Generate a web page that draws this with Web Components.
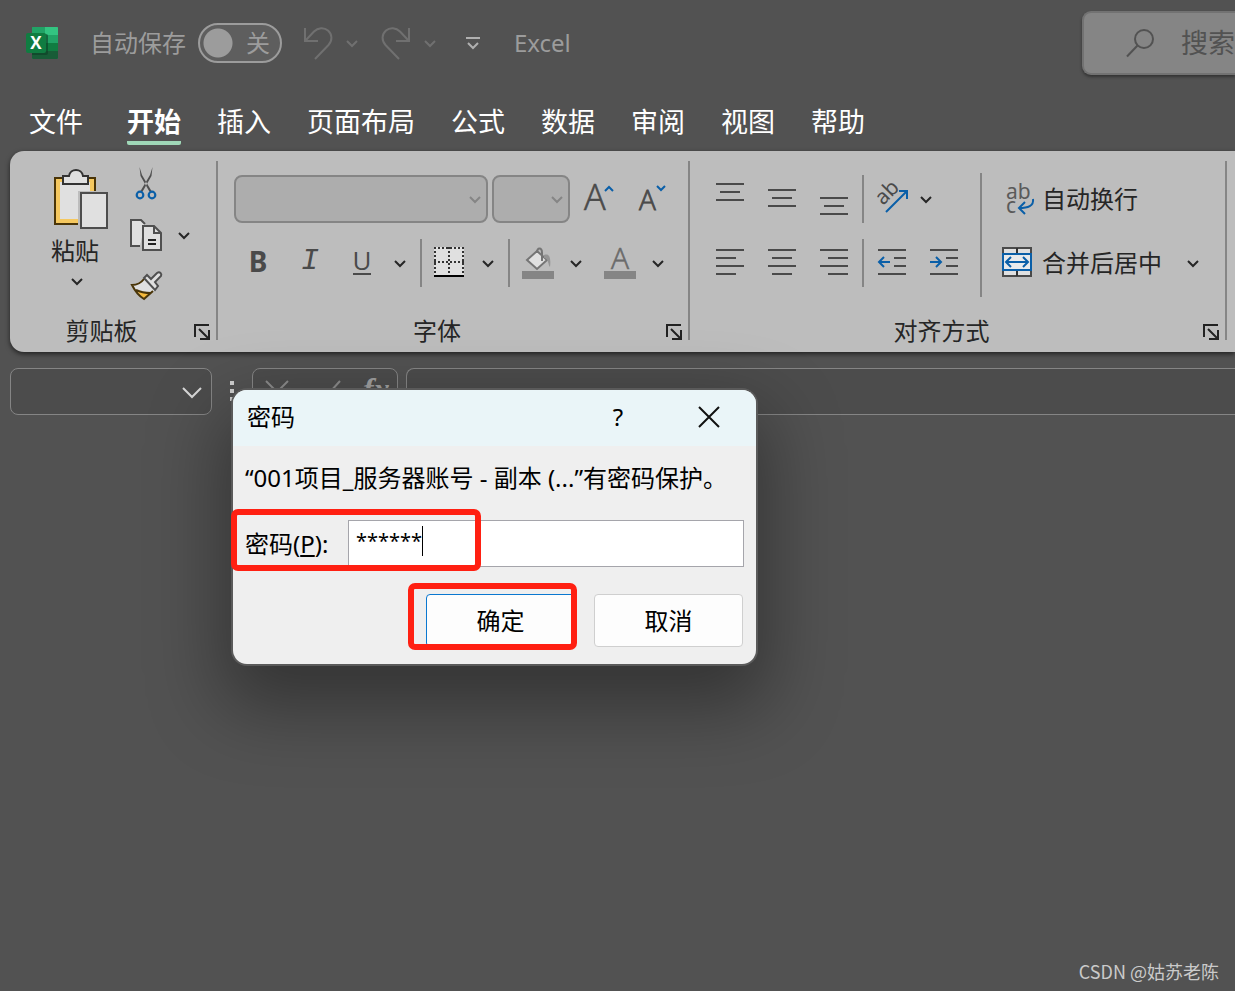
<!DOCTYPE html>
<html lang="zh-CN">
<head>
<meta charset="utf-8">
<title>Excel</title>
<style>
  html, body { margin: 0; height: 100%; }
  body {
    background: #525252;
    font-family: "Noto Sans", "Noto Sans CJK SC", sans-serif;
    overflow: hidden;
  }
</style>
</head>
<body>
<excel-window></excel-window>

<script>
const BASE = `
  *, *::before, *::after { box-sizing: border-box; }
  button, input, select {
    font: inherit; color: inherit; margin: 0; padding: 0;
    border: 0; background: none; outline: none; min-width: 0;
  }
  button { display: flex; align-items: center; justify-content: center; }
`;

function define(name, css, html, setup) {
  const template = document.createElement('template');
  template.innerHTML = `<style>${BASE}${css}</style>${html}`;
  customElements.define(name, class extends HTMLElement {
    constructor() {
      super();
      this.attachShadow({ mode: 'open' }).append(template.content.cloneNode(true));
    }
    connectedCallback() { if (setup) setup(this, this.shadowRoot); }
  });
}

/* Horizontal rules used by the alignment icons: [x1, x2, y] */
const rules = list => list.map(([a, b, y]) => `<path d="M${a} ${y}H${b}" stroke="#4a4a4a" stroke-width="2"/>`).join('');

const ICONS = {
  logo: [34, 34, `
    <path d="M8 1h24a1 1 0 0 1 1 1v30a1 1 0 0 1-1 1H8a1 1 0 0 1-1-1V2a1 1 0 0 1 1-1z" fill="#21a366"/>
    <path d="M20 1h12a1 1 0 0 1 1 1v7H20z" fill="#33c481"/>
    <path d="M7 9V2a1 1 0 0 1 1-1h12v8z" fill="#21a366"/>
    <path d="M7 9h13v8H7z" fill="#107c41"/>
    <path d="M20 17h13v8H20z" fill="#107c41"/>
    <path d="M7 17h13v8h13v7a1 1 0 0 1-1 1H8a1 1 0 0 1-1-1z" fill="#185c37"/>
    <path d="M7 8h14a2 2 0 0 1 2 2v17a2 2 0 0 1-2 2H7z" fill="#0d3d24" opacity=".6"/>
    <rect x="1" y="7" width="20" height="20" rx="2" fill="#107c41"/>
    <text x="11" y="23" font-size="17" font-weight="700" text-anchor="middle" fill="#fff" font-family="Open Sans, sans-serif">X</text>`],
  undo: [32, 34, `<path d="M3 2v13h13M4 14l8-8.500C16 1.500 22 1 26 4.500c4.500 4 4.500 10 .5 14.500L13 33" stroke="#707070" stroke-width="2"/>`],
  redo: [32, 34, `<path d="M29 2v13H16M28 14l-8-8.500C16 1.500 10 1 6 4.500c-4.500 4-4.500 10-.5 14.500L19 33" stroke="#707070" stroke-width="2"/>`],
  chevron: [12, 12, `<path d="M1 4l5 5 5-5" stroke="currentColor" stroke-width="2"/>`],
  chevwide: [20, 12, `<path d="M1 2l9 9 9-9" stroke="currentColor" stroke-width="2"/>`],
  customize: [16, 16, `<path d="M0 3h14M2 8l5 5 5-5" stroke="#b0b0b0" stroke-width="2"/>`],
  search: [30, 30, `<circle cx="19" cy="11" r="9" stroke="#525252" stroke-width="2"/><path d="M12.500 17.500L2 28.500" stroke="#525252" stroke-width="2"/>`],
  paste: [62, 62, `
    <rect x="9" y="10" width="40" height="46" fill="#f5c85f" stroke="#4a3508" stroke-width="2"/>
    <path d="M14 14h30v37H14z" fill="#e0e0e0"/>
    <path d="M17 16V8h6c1-8 13-8 14 0h5v8z" fill="#e0e0e0" stroke="#333" stroke-width="2"/>
    <path d="M32 23h30v37H32z" fill="#bdbdbd"/>
    <rect x="35" y="25" width="26" height="35" fill="#e0e0e0" stroke="#4d4d4d" stroke-width="2"/>`],
  cut: [34, 34, `
    <path d="M10.500 0L13 8l9.500 16-2 .8L11.500 9zM23.500 0L21 8l-9.500 16 2 .8L22.500 9z" fill="#505050"/>
    <circle cx="11" cy="28" r="3.300" stroke="#0a5fa8" stroke-width="2.200"/><circle cx="23" cy="28" r="3.300" stroke="#0a5fa8" stroke-width="2.200"/>`],
  copy: [34, 34, `
    <path d="M11 28H2V2h10l4 4" fill="#e0e0e0"/><path d="M11 28H2V2h10l4 4" stroke="#505050" stroke-width="2"/>
    <path d="M14 8h11l7 7v17H14z" fill="#e0e0e0" stroke="#505050" stroke-width="2"/>
    <path d="M25 8v7h7" stroke="#505050" stroke-width="2"/><path d="M19 22h8M19 26h8" stroke="#222" stroke-width="2"/>`],
  brush: [34, 34, `
    <path d="M3 16c6 0 9-2 12-6l11 11-11 9z" fill="#e0e0e0"/>
    <path d="M7 21c4 2 9 3 15 3l-7 6z" fill="#f5b93a"/>
    <path d="M15 10C12 14 9 16 3 16c3 6 7 11 12 14l9-8M7 21c4 2 9 3 15 3" stroke="#4a3508" stroke-width="2"/>
    <path d="M15 9l3-3 4 4 6-6c3-2 5 1 4 3l-6 6 3 4-3 4z" fill="#e0e0e0" stroke="#505050" stroke-width="2"/>`],
  launcher: [18, 18, `<path d="M2 15V3h14M6 7l9 9M16 8v9H7" stroke="#222" stroke-width="2"/>`],
  grow: [34, 34, `<text x="1" y="28" font-size="36" font-weight="300" fill="#4a4a4a" stroke="#4a4a4a" stroke-width=".6" font-family="Open Sans, sans-serif">A</text><path d="M22 9l4-4 4 4" stroke="#0a5fa8" stroke-width="2"/>`],
  shrink: [34, 34, `<text x="4" y="28" font-size="28" font-weight="300" fill="#4a4a4a" stroke="#4a4a4a" stroke-width=".8" font-family="Open Sans, sans-serif">A</text><path d="M22 4l4 4 4-4" stroke="#0a5fa8" stroke-width="2"/>`],
  borders: [32, 32, `
    <path d="M0 0h30v30H0z" fill="#e0e0e0"/>
    <path d="M0 1h30M0 15h30M1 0v28M15 0v28M29 0v28" stroke="#333" stroke-width="2" stroke-dasharray="2 2"/>
    <path d="M0 29h30" stroke="#000" stroke-width="2"/>`],
  fill: [34, 34, `
    <path d="M1 25h32v8H1z" fill="#858585"/>
    <path d="M6 14L16 5l10 9-10 9z" fill="#e0e0e0" stroke="#757575" stroke-width="2"/>
    <path d="M16 7c0-6 5-6 5 0v8" stroke="#757575" stroke-width="2"/>
    <path d="M23 9c6-2 7 4 6 12-2-2-1-8-6-9z" fill="#959595"/>`],
  fontcolor: [34, 34, `<path d="M1 25h32v8H1z" fill="#858585"/><text x="17" y="23" font-size="30" font-weight="300" text-anchor="middle" fill="#6a6a6a" stroke="#6a6a6a" stroke-width=".6" font-family="Open Sans, sans-serif">A</text>`],
  top: [28, 32, rules([[0, 28, 1], [4, 24, 9], [0, 28, 17]])],
  middle: [28, 32, rules([[0, 28, 7], [4, 24, 15], [0, 28, 23]])],
  bottom: [28, 32, rules([[0, 28, 15], [4, 24, 23], [0, 28, 31]])],
  left: [28, 28, rules([[0, 28, 1], [0, 20, 9], [0, 28, 17], [0, 20, 25]])],
  center: [28, 28, rules([[0, 28, 1], [4, 24, 9], [0, 28, 17], [4, 24, 25]])],
  right: [28, 28, rules([[0, 28, 1], [8, 28, 9], [0, 28, 17], [8, 28, 25]])],
  outdent: [28, 28, rules([[0, 28, 1], [16, 28, 9], [16, 28, 17], [0, 28, 25]]) + `<path d="M12 13H2M6 8l-5 5 5 5" stroke="#0a5fa8" stroke-width="2"/>`],
  indent: [28, 28, rules([[0, 28, 1], [16, 28, 9], [16, 28, 17], [0, 28, 25]]) + `<path d="M0 13h10M6 8l5 5-5 5" stroke="#0a5fa8" stroke-width="2"/>`],
  orient: [34, 34, `<text transform="translate(8 24) rotate(-45)" font-size="21" fill="#4a4a4a" font-family="Noto Sans, sans-serif">ab</text><path d="M11 30l20-20M24 9h8v8" stroke="#0a5fa8" stroke-width="2"/>`],
  wrap: [34, 34, `<text font-size="21" fill="#5a5a5a" font-family="Noto Sans, sans-serif"><tspan x="6" y="17">ab</tspan><tspan x="6" y="31">c</tspan></text><path d="M33 17c1 7-5 9-14 9M25 20l-6 6 6 6" stroke="#0a5fa8" stroke-width="2"/>`],
  merge: [34, 34, `
    <path d="M3 2h28v28H3z" fill="#e0e0e0" stroke="#4a4a4a" stroke-width="2"/><path d="M17 2v28" stroke="#333" stroke-width="2"/>
    <path d="M3 8h28v16H3z" fill="#e8eaec" stroke="#0a5fa8" stroke-width="2"/>
    <path d="M7 16h20M11 11l-5 5 5 5M23 11l5 5-5 5" stroke="#0a5fa8" stroke-width="2"/>`],
  cancel: [24, 24, `<path d="M1 1l22 22M23 1L1 23" stroke="#8c8c8c" stroke-width="2"/>`],
  enter: [30, 24, `<path d="M1 13l9 9L29 1" stroke="#8c8c8c" stroke-width="2"/>`],
  close: [22, 22, `<path d="M1 1l20 20M21 1L1 21" stroke="#111" stroke-width="2"/>`],
  grip: [4, 24, `<path d="M0 2h4M0 10h4M0 18h4" stroke="#d0d0d0" stroke-width="4"/>`]
};

customElements.define('ui-icon', class extends HTMLElement {
  connectedCallback() {
    if (this.shadowRoot) return;
    const [w, h, art] = ICONS[this.getAttribute('name')];
    this.attachShadow({ mode: 'open' }).innerHTML = `
      <style>:host { display: block; flex: none; } svg { display: block; overflow: visible; }</style>
      <svg width="${w}" height="${h}" viewBox="0 0 ${w} ${h}" fill="none" aria-hidden="true">${art}</svg>`;
  }
});

/* A ribbon tool: fixed cell with one icon or letter; "menu" makes it a narrow drop-down arrow */
define('tool-button', `
  :host { display: block; width: 52px; height: 48px; flex: none; }
  :host([menu]) { width: 24px; }
  :host([small]) { width: 34px; height: 34px; }
  button { width: 100%; height: 100%; }
`, `<button type="button"><slot></slot></button>`, (host, root) => {
  root.querySelector('button').setAttribute('aria-label', host.getAttribute('label') || '');
});

define('ribbon-combo', `
  :host { display: grid; height: 48px; flex: none; color: #858585; }
  select, ui-icon { grid-area: 1 / 1; }
  select { appearance: none; width: 100%; height: 100%; border: 2px solid #858585; border-radius: 8px; background: #adadad; }
  ui-icon { place-self: center end; margin-right: 7px; pointer-events: none; }
`, `<select></select><ui-icon name="chevron"></ui-icon>`, (host, root) => {
  root.querySelector('select').setAttribute('aria-label', host.getAttribute('label'));
});

define('ribbon-group', `
  :host { display: flex; flex: none; }
  section { flex: 1; display: flex; flex-direction: column; }
  .body { flex: 1; }
  footer { display: flex; align-items: center; height: 42px; padding-right: 5px; }
  h2 { flex: 1; margin: 0; font-size: 24px; line-height: 32px; font-weight: 400; text-align: center; color: #262626; }
  :host([wide]) h2 { padding-right: 9px; }
  footer button { width: 18px; height: 18px; }
  .rule { width: 2px; margin: 10px 0 12px; background: #858585; }
`, `
  <section>
    <div class="body"><slot></slot></div>
    <footer><h2></h2><button type="button" aria-label="更多设置"><ui-icon name="launcher"></ui-icon></button></footer>
  </section>
  <div class="rule"></div>
`, (host, root) => { root.querySelector('h2').textContent = host.getAttribute('label'); });

define('title-bar', `
  :host { display: flex; align-items: center; height: 86px; padding-left: 25px; color: #9c9c9c; font-size: 24px; line-height: 32px; }
  label { display: flex; align-items: center; gap: 12px; margin-left: 31px; }
  .switch { display: grid; align-items: center; width: 84px; height: 40px; }
  .switch > * { grid-area: 1 / 1; }
  .switch input { appearance: none; width: 84px; height: 40px; border: 2px solid #9c9c9c; border-radius: 20px; background: radial-gradient(circle at 18px 50%, #9c9c9c 14px, #5e5e5e 15px); }
  .switch span { justify-self: end; margin-right: 12px; pointer-events: none; }
  .history { display: flex; align-items: center; gap: 12px; margin-left: 20px; color: #707070; }
  .redo { margin-left: 10px; }
  .customize { margin-left: 18px; }
  h1 { margin: 0 0 0 32px; font-size: 24px; font-weight: 400; flex: 1; }
  .search { display: flex; align-items: center; gap: 26px; width: 153px; height: 64px; padding-left: 41px; background: #858585; border: 2px solid #727272; border-right: 0; border-radius: 9px 0 0 9px; box-shadow: 0 2px 3px #333; margin: 0; }
  .search input { flex: 1; font-size: 27px; line-height: 36px; color: #525252; }
  .search input::placeholder { color: #525252; opacity: 1; }
`, `
  <ui-icon name="logo"></ui-icon>
  <label>自动保存<span class="switch"><input type="checkbox" role="switch"><span>关</span></span></label>
  <div class="history">
    <button type="button" aria-label="撤消"><ui-icon name="undo"></ui-icon></button>
    <button type="button" aria-label="撤消列表"><ui-icon name="chevron"></ui-icon></button>
    <button class="redo" type="button" aria-label="恢复"><ui-icon name="redo"></ui-icon></button>
    <button type="button" aria-label="恢复列表"><ui-icon name="chevron"></ui-icon></button>
    <button class="customize" type="button" aria-label="自定义快速访问工具栏"><ui-icon name="customize"></ui-icon></button>
  </div>
  <h1>Excel</h1>
  <label class="search"><ui-icon name="search"></ui-icon><input type="text" placeholder="搜索" aria-label="搜索"></label>
`);

define('tab-strip', `
  :host { display: block; height: 65px; }
  nav { display: flex; gap: 36px; padding: 16px 0 0 29px; font-size: 27px; line-height: 40px; }
  a { color: #fff; text-decoration: none; height: 43px; white-space: nowrap; }
  a[aria-current] { font-weight: 700; border-bottom: 4px solid #a0d8b8; border-radius: 2px; margin-left: 8px; }
`, `
  <nav>
    <a href="#file">文件</a><a href="#home" aria-current="page">开始</a><a href="#insert">插入</a>
    <a href="#layout">页面布局</a><a href="#formulas">公式</a><a href="#data">数据</a>
    <a href="#review">审阅</a><a href="#view">视图</a><a href="#help">帮助</a>
  </nav>
`);

define('clipboard-tools', `
  :host { display: flex; padding: 16px 20px 0 36px; color: #262626; }
  .paste { flex-direction: column; width: 62px; margin: 0 21px 0 0; justify-content: flex-start; font-size: 24px; line-height: 42px; height: 134px; white-space: nowrap; }
  .paste ui-icon:first-child { margin-top: 1px; }
  .paste ui-icon:last-child { margin-top: 3px; }
  .paste span { margin-right: 4px; }
  .small { display: grid; grid-template-columns: 34px 24px; gap: 17px 9px; align-content: start; }
  .small [menu] { height: 34px; }
  .brush { grid-row: 3; }
`, `
  <button class="paste" type="button"><ui-icon name="paste"></ui-icon><span>粘贴</span><ui-icon name="chevron"></ui-icon></button>
  <div class="small">
    <tool-button small label="剪切"><ui-icon name="cut"></ui-icon></tool-button><span></span>
    <tool-button small label="复制"><ui-icon name="copy"></ui-icon></tool-button>
    <tool-button menu label="复制选项"><ui-icon name="chevron"></ui-icon></tool-button>
    <tool-button small class="brush" label="格式刷"><ui-icon name="brush"></ui-icon></tool-button>
  </div>
`);

define('font-tools', `
  :host { display: flex; flex-direction: column; gap: 16px; padding: 24px 10px 0 14px; color: #262626; }
  .row { display: flex; height: 48px; }
  .fonts { gap: 4px; padding-left: 2px; }
  .fonts tool-button + tool-button { margin-left: -4px; }
  .family { width: 254px; } .size { width: 78px; }
  .rule { width: 2px; margin: 0 2px 0 8px; background: #858585; }
  .letter { color: #4a4a4a; font-size: 28px; line-height: 36px; margin-bottom: 4px; }
  .i { font-family: "Liberation Mono", monospace; font-style: italic; font-size: 30px; }
  .u { font-family: "Open Sans", sans-serif; font-size: 26px; line-height: 26px; border-bottom: 2px solid #4a4a4a; }
  .last { margin-left: 6px; }
`, `
  <div class="row fonts">
    <ribbon-combo class="family" label="字体"></ribbon-combo><ribbon-combo class="size" label="字号"></ribbon-combo>
    <tool-button label="增大字号"><ui-icon name="grow"></ui-icon></tool-button>
    <tool-button label="减小字号"><ui-icon name="shrink"></ui-icon></tool-button>
  </div>
  <div class="row">
    <tool-button label="加粗"><b class="letter">B</b></tool-button>
    <tool-button label="倾斜"><span class="letter i">I</span></tool-button>
    <tool-button label="下划线"><span class="letter u">U</span></tool-button>
    <tool-button menu label="下划线选项"><ui-icon name="chevron"></ui-icon></tool-button>
    <span class="rule"></span>
    <tool-button label="边框"><ui-icon name="borders"></ui-icon></tool-button>
    <tool-button menu label="边框选项"><ui-icon name="chevron"></ui-icon></tool-button>
    <span class="rule"></span>
    <tool-button label="填充颜色"><ui-icon name="fill"></ui-icon></tool-button>
    <tool-button menu label="填充颜色选项"><ui-icon name="chevron"></ui-icon></tool-button>
    <tool-button class="last" label="字体颜色"><ui-icon name="fontcolor"></ui-icon></tool-button>
    <tool-button menu label="字体颜色选项"><ui-icon name="chevron"></ui-icon></tool-button>
  </div>
`);

define('align-tools', `
  :host { display: flex; padding: 24px 0 0 14px; color: #262626; font-size: 24px; line-height: 32px; }
  .col { display: flex; flex-direction: column; gap: 16px; }
  .row { display: flex; height: 48px; }
  .rule { width: 2px; margin: 0 2px; background: #858585; }
  .tall { width: 2px; height: 124px; margin: -2px 18px 0 10px; background: #858585; }
  .command { gap: 8px; white-space: nowrap; }
  .merge { gap: 19px; }
  .near { margin-left: -4px; }
`, `
  <div class="col">
    <div class="row">
      <tool-button label="顶端对齐"><ui-icon name="top"></ui-icon></tool-button>
      <tool-button label="垂直居中"><ui-icon name="middle"></ui-icon></tool-button>
      <tool-button label="底端对齐"><ui-icon name="bottom"></ui-icon></tool-button>
      <span class="rule"></span>
      <tool-button label="方向"><ui-icon name="orient"></ui-icon></tool-button>
      <tool-button menu class="near" label="方向选项"><ui-icon name="chevron"></ui-icon></tool-button>
    </div>
    <div class="row">
      <tool-button label="左对齐"><ui-icon name="left"></ui-icon></tool-button>
      <tool-button label="居中"><ui-icon name="center"></ui-icon></tool-button>
      <tool-button label="右对齐"><ui-icon name="right"></ui-icon></tool-button>
      <span class="rule"></span>
      <tool-button label="减少缩进量"><ui-icon name="outdent"></ui-icon></tool-button>
      <tool-button label="增加缩进量"><ui-icon name="indent"></ui-icon></tool-button>
    </div>
  </div>
  <span class="tall"></span>
  <div class="col">
    <div class="row"><button class="command" type="button"><ui-icon name="wrap"></ui-icon>自动换行</button></div>
    <div class="row merge">
      <button class="command" type="button"><ui-icon name="merge"></ui-icon>合并后居中</button>
      <tool-button menu label="合并选项"><ui-icon name="chevron"></ui-icon></tool-button>
    </div>
  </div>
`);

define('ribbon-bar', `
  :host { display: flex; margin-left: 10px; height: 201px; padding-right: 8px; background: #bdbdbd; border-radius: 14px 0 0 14px; box-shadow: 0 2px 5px rgba(0, 0, 0, .6); }
  .grow { flex: 1; }
`, `
  <ribbon-group label="剪贴板"><clipboard-tools></clipboard-tools></ribbon-group>
  <ribbon-group wide label="字体"><font-tools></font-tools></ribbon-group>
  <ribbon-group wide class="grow" label="对齐方式"><align-tools></align-tools></ribbon-group>
`);

define('formula-bar', `
  :host { display: flex; height: 47px; margin: 16px 0 0 10px; }
  .box { border: 1px solid #858585; border-radius: 8px; background: #4c4c4c; }
  .name { display: grid; width: 202px; color: #d8d8d8; }
  .name > * { grid-area: 1 / 1; }
  .name input { width: 100%; padding: 0 40px 0 12px; }
  .name button { place-self: center end; margin-right: 9px; }
  .grip { margin: 13px 18px 0; }
  .actions { display: flex; gap: 22px; width: 146px; padding: 11px 0 0 12px; }
  .actions button { height: 24px; }
  .fx { font-family: "Liberation Serif", serif; font-style: italic; font-weight: 700; font-size: 32px; line-height: 24px; margin-bottom: 6px; color: #a0a0a0; }
  .entry { flex: 1; margin-left: 8px; border-right: 0; border-radius: 8px 0 0 8px; color: #d8d8d8; padding: 0 12px; }
`, `
  <div class="box name"><input type="text" aria-label="名称框"><button type="button" aria-label="名称列表"><ui-icon name="chevwide"></ui-icon></button></div>
  <ui-icon class="grip" name="grip"></ui-icon>
  <div class="box actions">
    <button type="button" aria-label="取消输入"><ui-icon name="cancel"></ui-icon></button>
    <button type="button" aria-label="输入"><ui-icon name="enter"></ui-icon></button>
    <button type="button" aria-label="插入函数"><span class="fx">fx</span></button>
  </div>
  <input class="box entry" type="text" aria-label="编辑栏">
`);

define('password-dialog', `
  :host { display: block; width: 523px; border-radius: 14px; background: #efefef; color: #000; font-size: 24px; line-height: 32px; box-shadow: 0 0 0 2px #5a5a5a, 0 32px 72px 12px rgba(0, 0, 0, .36); }
  header { display: flex; align-items: center; height: 56px; padding: 0 36px 2px 14px; background: #eaf5f8; border-radius: 14px 14px 0 0; }
  h2 { flex: 1; margin: 0; font-size: 24px; font-weight: 400; }
  .help { width: 24px; margin-right: 68px; }
  .content { padding: 16px 12px 17px; }
  p { margin: 0; white-space: nowrap; }
  .field { display: flex; align-items: center; justify-content: space-between; margin-top: 26px; }
  .entry { display: grid; width: 396px; }
  .entry > * { grid-area: 1 / 1; }
  .entry input { width: 100%; height: 47px; border: 1px solid #a5a5ab; background: #fff; padding: 0 8px 6px 7px; font-size: 20px; }
  .caret { width: 1px; height: 30px; margin: 6px 0 0 74px; background: #000; }
  .actions { display: flex; justify-content: flex-end; gap: 19px; margin-top: 27px; padding-right: 1px; }
  .actions button { width: 149px; height: 53px; border: 1px solid #cfcfcf; border-radius: 4px; background: #fdfdfd; }
  .actions .primary { border-color: #0a78d0; }
`, `
  <header>
    <h2>密码</h2>
    <button class="help" type="button" aria-label="帮助">?</button>
    <button type="button" aria-label="关闭"><ui-icon name="close"></ui-icon></button>
  </header>
  <div class="content">
    <p>“001项目_服务器账号 - 副本 (...”有密码保护。</p>
    <div class="field">
      <label for="password">密码(<u>P</u>):</label>
      <div class="entry"><input id="password" type="text" value="******"><span class="caret"></span></div>
    </div>
    <div class="actions"><button class="primary" type="button">确定</button><button type="button">取消</button></div>
  </div>
`);

define('highlight-frame', `
  :host { display: block; box-sizing: border-box; border: 6px solid #ff2012; border-radius: 7px; pointer-events: none; }
`, ``);

define('excel-window', `
  :host { display: flex; flex-direction: column; min-height: 100vh; position: relative; }
  .sheet { flex: 1; display: flex; align-items: flex-end; justify-content: flex-end; padding: 0 16px 8px 0; font: 18px/24px "Noto Sans CJK SC", sans-serif; color: #cacaca; }
  .modal { position: absolute; left: 233px; top: 390px; }
  highlight-frame { position: absolute; }
  .mark-field { left: -2px; top: 119px; width: 250px; height: 62px; }
  .mark-ok { left: 175px; top: 193px; width: 169px; height: 67px; }
`, `
  <title-bar></title-bar>
  <tab-strip></tab-strip>
  <ribbon-bar></ribbon-bar>
  <formula-bar></formula-bar>
  <main class="sheet"><span>CSDN @姑苏老陈</span></main>
  <div class="modal">
    <password-dialog role="dialog" aria-label="密码"></password-dialog>
    <highlight-frame class="mark-field"></highlight-frame>
    <highlight-frame class="mark-ok"></highlight-frame>
  </div>
`);
</script>
</body>
</html>
